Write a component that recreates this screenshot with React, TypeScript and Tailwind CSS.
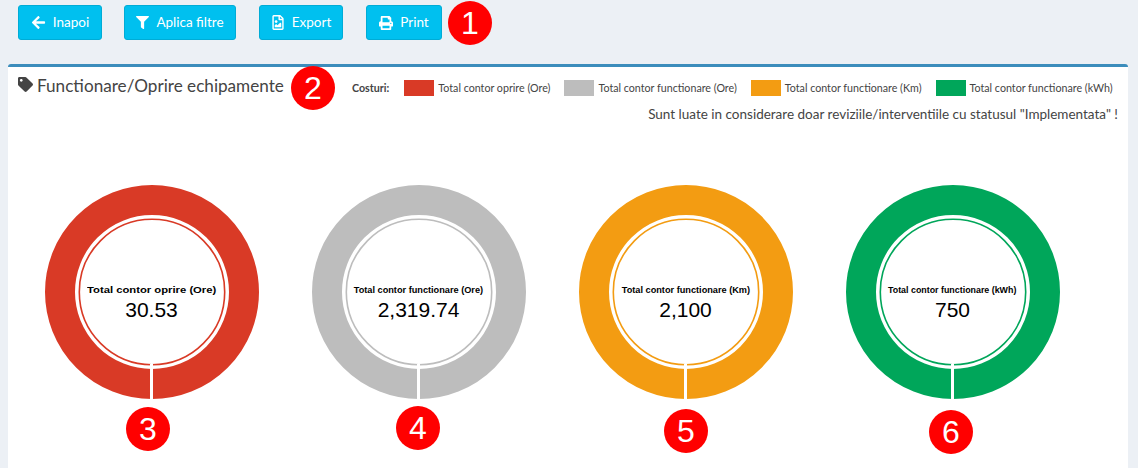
import { FaArrowLeft, FaFilter, FaRegFileImage, FaPrint, FaTag } from "react-icons/fa";

const charts = [
  { label: "Total contor oprire (Ore)", value: "30.53", color: "#d93a26", scale: "scale-x-[1.25]" },
  { label: "Total contor functionare (Ore)", value: "2,319.74", color: "#bdbdbd", scale: "scale-x-[1.02]" },
  { label: "Total contor functionare (Km)", value: "2,100", color: "#f39c12", scale: "scale-x-[1.02]" },
  { label: "Total contor functionare (kWh)", value: "750", color: "#00a65a", scale: "scale-x-[0.985]" },
];

const legend = [
  { label: "Total contor oprire (Ore)", color: "#d93a26" },
  { label: "Total contor functionare (Ore)", color: "#bdbdbd" },
  { label: "Total contor functionare (Km)", color: "#f39c12" },
  { label: "Total contor functionare (kWh)", color: "#00a65a" },
];

function Badge({ n, className }: { n: number; className: string }) {
  return (
    <div className={`absolute w-11 h-11 rounded-full bg-[#ff0000] text-white flex items-center justify-center text-[32px] font-['Liberation_Sans',sans-serif] ${className}`}>
      {n}
    </div>
  );
}

function Btn({ icon, text, className }: { icon: React.ReactNode; text: string; className: string }) {
  return (
    <button className={`h-[35px] flex items-center justify-center gap-[7px] rounded-[3px] bg-[#00c0ef] border border-[#00acd6] text-white text-[13.5px] ${className}`}>
      {icon}
      {text}
    </button>
  );
}

function Donut({ label, value, color, scale }: { label: string; value: string; color: string; scale: string }) {
  return (
    <div className="w-[267px] flex justify-center">
      <div className="relative w-[214px] h-[214px]">
        <svg width="214" height="214" viewBox="0 0 214 214">
          <circle cx="107" cy="107" r="92" fill="none" stroke={color} strokeWidth="30" />
          <circle cx="107" cy="107" r="72.7" fill="none" stroke={color} strokeWidth="1.6" />
          <rect x="105" y="179" width="3" height="36" fill="#ffffff" />
        </svg>
        <div className="absolute inset-0 flex flex-col items-center justify-center pt-[23px] font-['Liberation_Sans',sans-serif] text-black">
          <div className={`text-[9px] font-bold leading-[11px] whitespace-nowrap ${scale}`}>{label}</div>
          <div className="text-[21px] leading-[27px]">{value}</div>
        </div>
      </div>
    </div>
  );
}

export default function App() {
  return (
    <div className="relative w-[1138px] h-[468px] overflow-hidden bg-[#ecf0f5] font-['Lato',sans-serif] text-[#444]">
      <div className="flex pt-[5px] pl-[18px] h-[64px]">
        <Btn icon={<FaArrowLeft className="w-[15px] h-[15px]" />} text="Inapoi" className="w-[84px]" />
        <Btn icon={<FaFilter className="w-[13px] h-[13px]" />} text="Aplica filtre" className="w-[112px] ml-[22px]" />
        <Btn icon={<FaRegFileImage className="w-[14px] h-[15px]" />} text="Export" className="w-[84px] ml-[23px]" />
        <Btn icon={<FaPrint className="w-[14px] h-[14px]" />} text="Print" className="w-[76px] ml-[23px]" />
      </div>

      <div className="ml-2 w-[1120px] h-[404px] bg-white border-t-[3px] border-[#3c8dbc] rounded-t-[3px]">
        <div className="flex items-start pl-[10px]">
          <div className="flex shrink-0 items-center gap-[4px] pt-[7px] text-[17.15px] leading-[24px] whitespace-nowrap w-[334px]">
            <FaTag className="w-[15px] h-[15px] -mt-[4px]" />
            Functionare/Oprire echipamente
          </div>
          <div className="flex shrink-0 items-center pt-[12px] text-[10.7px] leading-[16px] whitespace-nowrap">
            <b className="font-bold mr-[15px]">Costuri:</b>
            {legend.map((l) => (
              <div key={l.label} className="flex items-center mr-[14px] last:mr-0">
                <span className="w-[30px] h-4 mr-[4px]" style={{ backgroundColor: l.color }} />
                <span className="pt-[1px]">{l.label}</span>
              </div>
            ))}
          </div>
        </div>
        <div className="text-right pr-[10px] text-[13.5px] leading-[18px] mt-[7px]">
          Sunt luate in considerare doar reviziile/interventiile cu statusul "Implementata" !
        </div>
        <div className="flex pl-[10px] mt-[62px]">
          {charts.map((c) => (
            <Donut key={c.label} {...c} />
          ))}
        </div>
      </div>

      <Badge n={1} className="left-[448px] top-[1px]" />
      <Badge n={2} className="left-[291px] top-[66px]" />
      <Badge n={3} className="left-[126px] top-[407px]" />
      <Badge n={4} className="left-[396px] top-[406px]" />
      <Badge n={5} className="left-[664px] top-[409px]" />
      <Badge n={6} className="left-[929px] top-[410px]" />
    </div>
  );
}
